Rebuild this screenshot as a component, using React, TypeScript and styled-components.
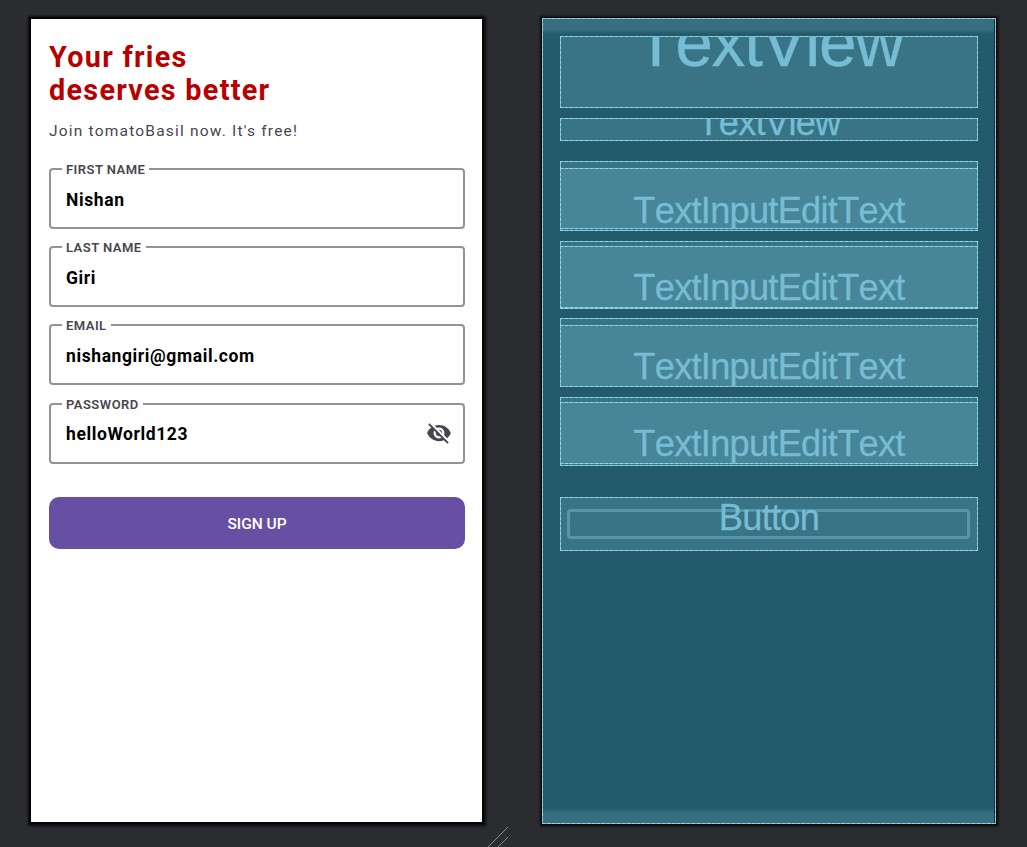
import React from "react";
import styled, { createGlobalStyle, css } from "styled-components";

const GlobalStyle = createGlobalStyle`
  * { box-sizing: border-box; }
  body { margin: 0; background: #2b2c30; overflow: hidden; }
`;

const Workspace = styled.main`
  position: relative;
  display: flex;
  align-items: flex-start;
  gap: 60px;
  width: 1027px;
  height: 847px;
  padding: 18px 0 0 31px;
  background: #2b2c30;
  overflow: hidden;
`;

const Phone = styled.section`
  width: 451px;
  height: 803px;
  margin-top: 1px;
  padding: 22px 17px 0 18px;
  background: #fff;
  font-family: Roboto, "Liberation Sans", sans-serif;
  box-shadow: 0 0 0 2px #050505, 0 0 2px 3px #101113, 1px 1px 2px 3px #111214;
`;

const Title = styled.h1`
  margin: 0;
  color: #b80000;
  font-size: 28.8px;
  font-weight: 700;
  line-height: 33px;
  letter-spacing: 1.28px;
  white-space: pre-line;
`;

const Subtitle = styled.p`
  margin: 15px 0 0;
  color: #49454f;
  font-size: 15.5px;
  line-height: 18px;
  letter-spacing: 1.2px;
`;

const Fields = styled.div`
  display: flex;
  flex-direction: column;
  gap: 10.2px;
  margin-top: 21px;
`;

const Field = styled.fieldset`
  display: flex;
  align-items: flex-start;
  justify-content: space-between;
  width: 416px;
  height: 68px;
  margin: 0;
  padding: 12.5px 11px 0 15px;
  border: 2px solid #939393;
  border-radius: 4px;
`;

const Legend = styled.legend`
  height: 16px;
  margin-left: -4px;
  padding: 0 4px;
  color: #49454f;
  font-size: 13px;
  font-weight: 600;
  line-height: 17px;
  letter-spacing: 0.47px;
`;

const Value = styled.span`
  color: #000;
  font-size: 17.5px;
  font-weight: 700;
  line-height: 21px;
  letter-spacing: 0.6px;
`;

const SignUp = styled.button`
  display: block;
  width: 416px;
  height: 52px;
  margin-top: 33px;
  padding: 2px 0 0;
  border: 0;
  border-radius: 10px;
  background: #6750a4;
  color: #fff;
  font: 500 15.5px Roboto, "Liberation Sans", sans-serif;
`;

const dashX = "repeating-linear-gradient(90deg, #8fd6e4 0 3px, #72b8c9 3px 5px)";
const dashY = "repeating-linear-gradient(180deg, #8fd6e4 0 3px, #72b8c9 3px 5px)";

const dashedEdges = css`
  background-image: ${dashX}, ${dashX}, ${dashY}, ${dashY};
  background-repeat: no-repeat;
  background-position: 0 0, 0 100%, 0 0, 100% 0;
  background-size: 100% 1px, 100% 1px, 1px 100%, 1px 100%;
`;

const Blueprint = styled.section`
  width: 454px;
  height: 806px;
  padding: 1px;
  background-color: #235b6d;
  ${dashedEdges}
  box-shadow: 0 0 0 1px #050607, 0 0 2px 2px #101113, 1px 1px 2px 1px #111214;
`;

const Surface = styled.div`
  height: 804px;
  padding: 17px 16px 0 17px;
  border-right: 1px solid #102f38;
  background: linear-gradient(#386f80 0 10px, #235b6d 15px calc(100% - 15px), #386f80 calc(100% - 10px));
`;

const ViewBox = styled.div<{ $height: number; $gap?: number }>`
  width: 418px;
  height: ${(p) => p.$height}px;
  margin-top: ${(p) => p.$gap ?? 0}px;
  background-color: #387386;
  ${dashedEdges}
  overflow: hidden;
`;

const InputBox = styled(ViewBox)<{ $inset: number }>`
  padding-top: ${(p) => p.$inset}px;
`;

const EditBox = styled.div<{ $height: number }>`
  height: ${(p) => p.$height}px;
  background-color: #478599;
  ${dashedEdges}
  overflow: hidden;
`;

const TypeName = styled.div<{ $shift: number; $size?: number }>`
  margin-top: ${(p) => p.$shift}px;
  color: #76bdd3;
  font-family: "Liberation Sans", Arial, sans-serif;
  font-size: ${(p) => p.$size ?? 36.2}px;
  font-kerning: none;
  letter-spacing: -0.02em;
  line-height: 40px;
  text-align: center;
  white-space: nowrap;
  -webkit-text-stroke: 0.3px #76bdd3;
`;

const ButtonOutline = styled.div`
  width: 403px;
  height: 30px;
  margin: 12px 0 0 7px;
  border: 3px solid #5596aa;
  border-radius: 4px;
`;

const ButtonBox = styled(ViewBox)`
  padding-top: 0.1px;
`;

const Grip = styled.svg`
  position: absolute;
  left: 486px;
  top: 826px;
`;

const EyeIcon = styled.svg`
  margin-top: -4px;
`;

const fields = [
  { label: "FIRST NAME", value: "Nishan" },
  { label: "LAST NAME", value: "Giri" },
  { label: "EMAIL", value: "nishangiri@gmail.com" },
  { label: "PASSWORD", value: "helloWorld123", secret: true },
];

const inputs = [
  { height: 70, gap: 20, inset: 7, inner: 61, shift: 23 },
  { height: 68, gap: 10, inset: 5, inner: 62, shift: 22 },
  { height: 69, gap: 9, inset: 7, inner: 62, shift: 22 },
  { height: 69, gap: 10, inset: 5, inner: 62, shift: 22 },
];

const HiddenEye = () => (
  <EyeIcon width="26" height="26" viewBox="0 0 24 24" fill="#49454f">
    <path d="M12 7c2.76 0 5 2.24 5 5 0 .65-.13 1.26-.36 1.83l2.92 2.92c1.51-1.26 2.7-2.89 3.43-4.75-1.73-4.39-6-7.5-11-7.5-1.4 0-2.74.25-3.98.7l2.16 2.16C10.74 7.13 11.35 7 12 7zM2 4.27l2.28 2.28.46.46C3.08 8.3 1.78 10.02 1 12c1.73 4.39 6 7.5 11 7.5 1.55 0 3.03-.3 4.38-.84l.42.42L19.73 22 21 20.73 3.27 3 2 4.27zM7.53 9.8l1.55 1.55c-.05.21-.08.43-.08.65 0 1.66 1.34 3 3 3 .22 0 .44-.03.65-.08l1.55 1.55c-.67.33-1.41.53-2.2.53-2.76 0-5-2.24-5-5 0-.79.2-1.53.53-2.2zm4.31-.78 3.15 3.15.02-.16c0-1.66-1.34-3-3-3l-.17.01z" />
  </EyeIcon>
);

export default function App() {
  return (
    <>
      <GlobalStyle />
      <Workspace>
        <Phone>
          <Title>{"Your fries\ndeserves better"}</Title>
          <Subtitle>Join tomatoBasil now. It's free!</Subtitle>
          <Fields>
            {fields.map((f) => (
              <Field key={f.label}>
                <Legend>{f.label}</Legend>
                <Value>{f.value}</Value>
                {f.secret && <HiddenEye />}
              </Field>
            ))}
          </Fields>
          <SignUp>SIGN UP</SignUp>
        </Phone>
        <Blueprint>
          <Surface>
            <ViewBox $height={72}>
              <TypeName $shift={-13} $size={67.7}>TextView</TypeName>
            </ViewBox>
            <ViewBox $height={23} $gap={10}>
              <TypeName $shift={-15}>TextView</TypeName>
            </ViewBox>
            {inputs.map((b, i) => (
              <InputBox key={i} $height={b.height} $gap={b.gap} $inset={b.inset}>
                <EditBox $height={b.inner}>
                  <TypeName $shift={b.shift}>TextInputEditText</TypeName>
                </EditBox>
              </InputBox>
            ))}
            <ButtonBox $height={54} $gap={31}>
              <ButtonOutline />
              <TypeName $shift={-41}>Button</TypeName>
            </ButtonBox>
          </Surface>
        </Blueprint>
        <Grip width="24" height="22" viewBox="0 0 24 22" stroke="#898a8c" fill="none">
          <path d="M1 22 22 1M11 22 22 11" />
        </Grip>
      </Workspace>
    </>
  );
}
